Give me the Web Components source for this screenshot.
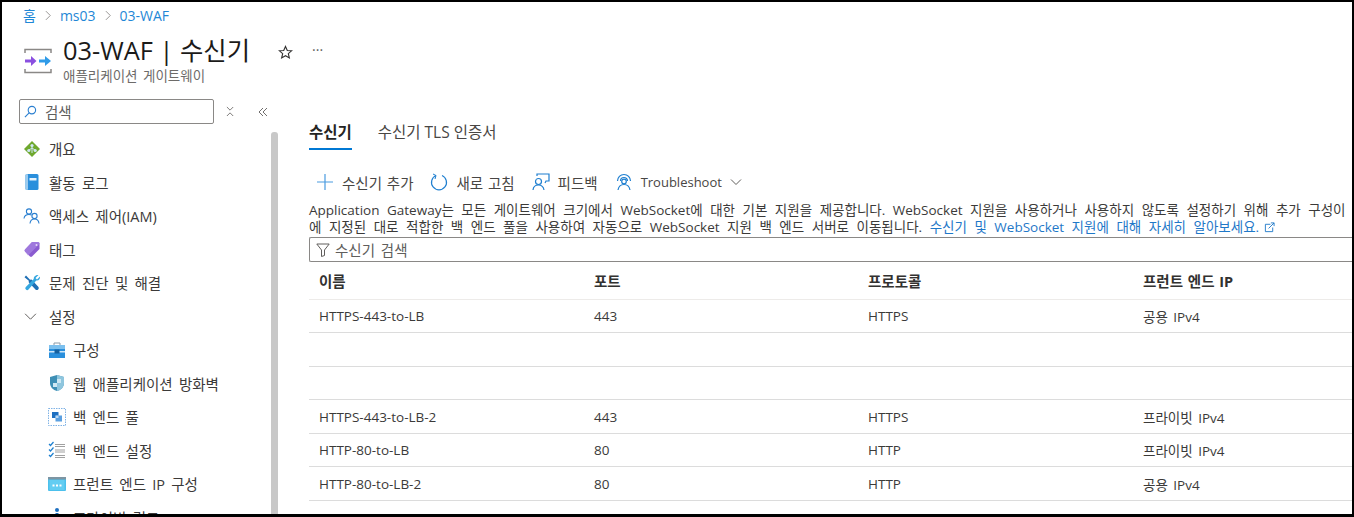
<!DOCTYPE html>
<html lang="ko">
<head>
<meta charset="utf-8">
<title>03-WAF | 수신기</title>
<style>
  html, body { margin: 0; padding: 0; background: #fff; }
  body { width: 1354px; height: 517px; overflow: hidden; font-family: "Open Sans", "Noto Sans CJK KR", sans-serif; }
</style>
</head>
<body>
<waf-page></waf-page>

<script>
const FONT = '"Open Sans", "Noto Sans CJK KR", sans-serif';

// icons used by the side menu
const ICONS = {
  overview: `<svg viewBox="0 0 18 18" width="18" height="18"><path d="M9 1l8 8-8 8-8-8z" fill="#6fa82e"/><circle cx="9" cy="5.5" r="1.6" fill="#cfe6f5"/><circle cx="5.8" cy="10.5" r="1.6" fill="#cfe6f5"/><circle cx="12.2" cy="10.5" r="1.6" fill="#cfe6f5"/><path d="M9 6v7M9 8l-3 2M9 8l3 2" stroke="#cfe6f5" fill="none"/></svg>`,
  log: `<svg viewBox="0 0 18 18" width="18" height="18"><rect x="2.5" y="1" width="13" height="16" rx="1.5" fill="#2a8fdc"/><rect x="2.5" y="1" width="2.5" height="16" rx="1" fill="#9ccbee"/><rect x="6.5" y="5" width="7" height="2.5" fill="#e6f3fc"/></svg>`,
  iam: `<svg viewBox="0 0 18 18" width="18" height="18" fill="none" stroke="#2a7fd0" stroke-width="1.1"><circle cx="6" cy="4.5" r="2.6"/><path d="M1 11.5c.3-2.6 2-4 5-4 1 0 1.8.2 2.5.6"/><circle cx="11.5" cy="9" r="2.6"/><path d="M7 16.5c.3-2.8 2-4.5 4.5-4.5s4.2 1.7 4.5 4.5"/></svg>`,
  tag: `<svg viewBox="0 0 18 18" width="18" height="18"><path d="M9 2h6a1.5 1.5 0 0 1 1.5 1.5V9L9 16.5a1.5 1.5 0 0 1-2 0L2 11.5a1.5 1.5 0 0 1 0-2z" fill="#8a5bd0"/><path d="M9 2h6a1.5 1.5 0 0 1 1.5 1.5V4L5 15.5l-3-4a1.5 1.5 0 0 1 0-2z" fill="#a884e2" opacity=".7"/><circle cx="13.5" cy="5" r="1" fill="#e8dcf8"/></svg>`,
  tools: `<svg viewBox="0 0 18 18" width="18" height="18"><path d="M3 1.5l4 4.2 1.5-.2 7 7.5a2 2 0 0 1-2.8 2.7L5.7 8.3l.1-1.5L1.5 3.2z" fill="#1f6fb5"/><path d="M15.5 1l-3 3 1.5 1.5 3-3c.4 2-1.2 4.5-3.700 4L5.500 15.500a1.800 1.800 0 0 1-2.700-2.500l8-8c-.5-2.500 2.500-4.500 4.700-4z" fill="#35a7e0"/></svg>`,
  chevron: `<svg style="margin-left: -3px" viewBox="0 0 12 12" width="13" height="13" fill="none" stroke="#605e5c" stroke-width=".9"><path d="M1 3.5l5 5 5-5"/></svg>`,
  config: `<svg viewBox="0 0 18 18" width="18" height="18"><path d="M6 4V2h6v2" fill="none" stroke="#8a9aa8" stroke-width="1"/><rect x="1" y="4" width="16" height="13" fill="#2a8fdc"/><rect x="1" y="4" width="16" height="4" fill="#7cc0ee"/><rect x="1" y="10" width="16" height="1.5" fill="#cde6f8"/><rect x="6.5" y="8.5" width="5" height="4" fill="#15609f"/></svg>`,
  shield: `<svg viewBox="0 0 18 18" width="18" height="18"><path d="M9 1l7 2v6c0 4-3 7-7 8-4-1-7-4-7-8V3z" fill="#3e8fb5"/><path d="M9 1l7 2v6c0 4-3 7-7 8z" fill="#8fc6de"/><path d="M9 5h4v4H9z" fill="#cfe8f3"/><path d="M5 9h4v4H5z" fill="#cfe8f3"/></svg>`,
  pool: `<svg viewBox="0 0 18 18" width="18" height="18"><rect x=".5" y=".5" width="17" height="17" fill="#fff" stroke="#7fb2e5" stroke-dasharray="1.5 1"/><rect x="4" y="4" width="6.5" height="6" fill="#1e6fc0"/><rect x="7.5" y="7.5" width="6.5" height="6" fill="#5a9fe0"/><rect x="7.5" y="7.5" width="3" height="2.5" fill="#bcd9f3"/></svg>`,
  settings: `<svg viewBox="0 0 18 18" width="18" height="18" fill="none"><path d="M1 3l1.500 1.500L5.500 1M1 8.500L2.500 10l3-3.500M1 14l1.500 1.500 3-3.500" stroke="#1e80d0" stroke-width="1.2"/><path d="M7 3.500h10M7 5.500h10M7 9h10M7 11h10M7 14.500h10M7 16.500h10" stroke="#a0a0a0"/></svg>`,
  frontend: `<svg viewBox="0 0 18 18" width="18" height="18"><rect x="0" y="2" width="18" height="14" rx="1" fill="#4cc0ec"/><rect x="0" y="2" width="18" height="2.5" fill="#7d95a3"/><rect x="1.5" y="5" width="15" height="10" fill="#63cdf2"/><g fill="#fff"><rect x="4.5" y="9.5" width="2" height="2"/><rect x="8" y="9.5" width="2" height="2"/><rect x="11.5" y="9.5" width="2" height="2"/></g></svg>`,
  link: `<svg viewBox="0 0 18 18" width="18" height="18"><circle cx="9" cy="2" r="2" fill="#1e6fc0"/><rect x="7.5" y="5" width="3" height="12" fill="#1e6fc0"/></svg>`
};

// breadcrumb line and resource title
class WafHeader extends HTMLElement {
  constructor() {
    super();
    this.attachShadow({ mode: 'open' });
    this.shadowRoot.innerHTML = `
      <style>
        :host { display: block; font-family: ${FONT}; }
        .crumbs { display: flex; align-items: center; height: 20px; padding: 3px 0 0 21px; font-size: 14px; color: #1f87d6; }
        .crumbs svg { margin: 0 8px 0 9px; }
        .head { display: flex; align-items: flex-start; margin-top: 9px; padding-left: 22px; }
        .logo { margin-top: 14px; }
        .titles { margin-left: 11px; }
        h1 { margin: 0; font-size: 25.4px; line-height: 32px; font-weight: 400; color: #1b1a19; white-space: nowrap; }
        .sub { font-size: 13.5px; word-spacing: 2px; line-height: 14px; margin-top: 3px; color: #6d6b69; white-space: nowrap; }
        .star { margin: 11px 0 0 28px; }
        .more { margin: 6px 0 0 19px; font-size: 14px; color: #605e5c; }
      </style>
      <div class="crumbs">
        <span>홈</span>
        <svg viewBox="0 0 8 12" width="7" height="11" fill="none" stroke="#8a8886"><path d="M1 1l5 5-5 5"/></svg>
        <span>ms03</span>
        <svg viewBox="0 0 8 12" width="7" height="11" fill="none" stroke="#8a8886"><path d="M1 1l5 5-5 5"/></svg>
        <span>03-WAF</span>
      </div>
      <div class="head">
        <svg class="logo" viewBox="0 0 28 26" width="28" height="26">
          <path d="M1 5V1.500h26V5M1 21v3.500h26V21" fill="none" stroke="#8a8886" stroke-width="1.5"/>
          <path d="M1 13h7" stroke="#8a4fe0" stroke-width="3"/><path d="M7 8l5.500 5-5.500 5z" fill="#8a4fe0"/>
          <path d="M15 13h7" stroke="#2f9be8" stroke-width="3"/><path d="M21 8l6 5-6 5z" fill="#2f9be8"/>
        </svg>
        <div class="titles">
          <h1>03-WAF | 수신기</h1>
          <div class="sub">애플리케이션 게이트웨이</div>
        </div>
        <svg class="star" viewBox="0 0 16 16" width="15" height="15" fill="none" stroke="#323130" stroke-width="1.2"><path d="M8 1.500l1.900 4.300 4.600.4-3.500 3 1.100 4.600L8 11.400 3.900 13.800 5 9.200l-3.500-3 4.600-.4z"/></svg>
        <div class="more">···</div>
      </div>
    `;
  }
}

// left hand resource menu, with a scrollbar on the right edge
class WafSidebar extends HTMLElement {
  constructor() {
    super();
    this.attachShadow({ mode: 'open' });
    this.shadowRoot.innerHTML = `
      <style>
        :host { display: block; width: 278px; flex: none; font-family: ${FONT}; position: relative; height: 100%; overflow: hidden; }
        .search-row { display: flex; align-items: center; padding-left: 17px; height: 25px; }
        .search { box-sizing: border-box; width: 195px; height: 25px; border: 1px solid #8a8886; border-radius: 2px; display: flex; align-items: center; padding-left: 4px; font-size: 14.5px; color: #605e5c; gap: 8px; }
        .x { margin-left: 12px; }
        .coll { margin-left: 23px; }
        .scroll { position: absolute; left: 269px; top: 33px; bottom: 0; width: 7px; background: #c8c8c8; border-radius: 3px 3px 0 0; }
        .items { padding-top: 8px; }
      </style>
      <div class="search-row">
        <div class="search">
          <svg viewBox="0 0 14 14" width="13" height="13" fill="none" stroke="#2a7fd0" stroke-width="1.2"><circle cx="8.5" cy="5.5" r="4"/><path d="M5.500 8.500L1 13"/></svg>
          <span>검색</span>
        </div>
        <svg class="x" viewBox="0 0 10 12" width="9" height="11" fill="none" stroke="#605e5c" stroke-width=".9"><path d="M1 1l3.500 3.500L8 1M1 11l3.500-3.500L8 11"/></svg>
        <svg class="coll" viewBox="0 0 10 10" width="10" height="10" fill="none" stroke="#605e5c" stroke-width=".9"><path d="M5 1L1 5l4 4M9 1L5 5l4 4"/></svg>
      </div>
      <div class="items"><slot></slot></div>
      <div class="scroll"></div>
    `;
  }
}

// one row of the side menu; the child attribute indents items of a group
class WafNavItem extends HTMLElement {
  constructor() {
    super();
    this.attachShadow({ mode: 'open' });
  }
  connectedCallback() {
    const icon = ICONS[this.getAttribute('icon')] || '';
    const child = this.hasAttribute('child');
    this.shadowRoot.innerHTML = `
      <style>
        :host { display: flex; align-items: center; height: 33.5px; padding-left: ${child ? 46 : 21}px; font-size: 14.5px; word-spacing: 2.5px; color: #3b3a39; white-space: nowrap; }
        .icon { width: 18px; height: 18px; flex: none; margin-right: ${child ? 7 : 8}px; display: flex; align-items: center; justify-content: center; }
      </style>
      <span class="icon">${icon}</span><slot></slot>
    `;
  }
}

class WafTabs extends HTMLElement {
  constructor() {
    super();
    this.attachShadow({ mode: 'open' });
    this.shadowRoot.innerHTML = `
      <style>
        :host { display: flex; gap: 26px; font-family: ${FONT}; font-size: 15.5px; color: #484644; }
        div { height: 27px; line-height: 22px; white-space: nowrap; }
        .on { font-weight: 700; color: #252423; border-bottom: 2px solid #0078d4; }
      </style>
      <div class="on">수신기</div>
      <div>수신기 TLS 인증서</div>
    `;
  }
}

class WafToolbar extends HTMLElement {
  constructor() {
    super();
    this.attachShadow({ mode: 'open' });
    this.shadowRoot.innerHTML = `
      <style>
        :host { display: flex; align-items: center; height: 24px; font-family: ${FONT}; font-size: 14.5px; word-spacing: 1px; color: #484644; padding-left: 8px; white-space: nowrap; }
        span { display: flex; align-items: center; gap: 8px; margin-right: 17px; }
        .latin { font-size: 13px; }
        svg { flex: none; }
      </style>
      <span style="gap: 9px">
        <svg viewBox="0 0 16 16" width="16" height="16" fill="none" stroke="#4a9be0" stroke-width="1.2"><path d="M8 0v16M0 8h16"/></svg>
        수신기 추가
      </span>
      <span>
        <svg viewBox="0 0 18 18" width="18" height="18" fill="none" stroke="#1f7fd0" stroke-width="1.2"><path d="M6 2.500a7.500 7.500 0 1 0 6 0"/><path d="M3 1l3 1.500-1 3.500" stroke-width="1"/></svg>
        새로 고침
      </span>
      <span>
        <svg viewBox="0 0 18 18" width="18" height="18" fill="none" stroke="#1f7fd0" stroke-width="1.2"><path d="M5 3V1h12v7h-3l-1 2"/><circle cx="6.5" cy="8.5" r="3"/><path d="M1 17c.3-3 2.500-5 5.500-5s5 2 5.500 5"/></svg>
        피드백
      </span>
      <span class="latin">
        <svg viewBox="0 0 18 18" width="18" height="18" fill="none" stroke="#1f7fd0" stroke-width="1.2"><path d="M2.500 8a6.500 6.500 0 1 1 13 0"/><path d="M5.500 8a3.500 3.500 0 1 1 7 0"/><circle cx="9" cy="8.500" r="2.300"/><path d="M3 17c.5-3 2.500-5.500 6-5.500s5.500 2.500 6 5.500"/></svg>
        Troubleshoot
        <svg viewBox="0 0 12 12" width="12" height="12" fill="none" stroke="#605e5c"><path d="M1 3.500l5 5 5-5"/></svg>
      </span>
    `;
  }
}

class WafNotice extends HTMLElement {
  constructor() {
    super();
    this.attachShadow({ mode: 'open' });
    this.shadowRoot.innerHTML = `
      <style>
        :host { display: block; font-family: ${FONT}; font-size: 13.5px; word-spacing: 4px; line-height: 17px; color: #3b3a39; white-space: nowrap; }
        a { color: #1f78c8; text-decoration: none; }
        svg { vertical-align: -1px; margin-left: -3px; }
      </style>
      Application Gateway는 모든 게이트웨어 크기에서 WebSocket에 대한 기본 지원을 제공합니다. WebSocket 지원을 사용하거나 사용하지 않도록 설정하기 위해 추가 구성이<br>
      에 지정된 대로 적합한 백 엔드 풀을 사용하여 자동으로 WebSocket 지원 백 엔드 서버로 이동됩니다. <a>수신기 및 WebSocket 지원에 대해 자세히 알아보세요.
      <svg viewBox="0 0 12 12" width="11" height="11" fill="none" stroke="#1f78c8"><path d="M7 2.500H1.500v8h8V6M5 7l6-6M7.500 1H11v3.500"/></svg></a>
    `;
  }
}

class WafFilter extends HTMLElement {
  constructor() {
    super();
    this.attachShadow({ mode: 'open' });
    this.shadowRoot.innerHTML = `
      <style>
        :host { box-sizing: border-box; display: flex; align-items: center; gap: 5px; height: 25px; padding-left: 6px; border: 1px solid #8a8886; border-right: 0; border-radius: 2px 0 0 2px; font-family: ${FONT}; font-size: 14.5px; word-spacing: 2px; color: #605e5c; }
      </style>
      <svg viewBox="0 0 14 14" width="14" height="14" fill="none" stroke="#605e5c"><path d="M.8 1h12.400L8.500 7v5.500l-3 1V7z"/></svg>
      <span>수신기 검색</span>
    `;
  }
}

// listener table; columns come from the grid on each row
class WafTable extends HTMLElement {
  constructor() {
    super();
    this.attachShadow({ mode: 'open' });
  }
  set rows(data) {
    this._rows = data;
    this.render();
  }
  render() {
    const head = ['이름', '포트', '프로토콜', '프런트 엔드 IP'];
    const row = (cells, cls) => `<div class="row ${cls}">${cells.map(c => `<div>${c}</div>`).join('')}</div>`;
    this.shadowRoot.innerHTML = `
      <style>
        :host { display: block; font-family: ${FONT}; font-size: 13.5px; word-spacing: 2px; color: #3b3a39; white-space: nowrap; }
        .row { display: grid; grid-template-columns: 275px 274px 275px 1fr; align-items: center; box-sizing: border-box; height: 33.5px; padding: 1px 0 0 10px; border-bottom: 1px solid #dcdcdc; }
        .head { height: 37.5px; font-size: 14.5px; word-spacing: 1px; font-weight: 700; color: #323130; border-bottom-color: #edebe9; padding-top: 0; }
      </style>
      ${row(head, 'head')}
      ${this._rows.map(r => row(r, '')).join('')}
    `;
  }
}

class WafPage extends HTMLElement {
  constructor() {
    super();
    this.attachShadow({ mode: 'open' });
    this.shadowRoot.innerHTML = `
      <style>
        :host { display: flex; flex-direction: column; box-sizing: border-box; width: 1354px; height: 517px; border: solid #000; border-width: 2px 2px 3px 2px; overflow: hidden; background: #fff; }
        .body { display: flex; flex: 1; min-height: 0; margin-top: 16px; }
        .main { flex: 1; min-width: 0; padding: 22px 0 0 29px; overflow: hidden; }
        waf-toolbar { margin-top: 20px; }
        waf-notice { margin-top: 8px; }
        waf-filter { margin-top: 1px; }
      </style>
      <waf-header></waf-header>
      <div class="body">
        <waf-sidebar>
          <waf-nav-item icon="overview">개요</waf-nav-item>
          <waf-nav-item icon="log">활동 로그</waf-nav-item>
          <waf-nav-item icon="iam">액세스 제어(IAM)</waf-nav-item>
          <waf-nav-item icon="tag">태그</waf-nav-item>
          <waf-nav-item icon="tools">문제 진단 및 해결</waf-nav-item>
          <waf-nav-item icon="chevron">설정</waf-nav-item>
          <waf-nav-item icon="config" child>구성</waf-nav-item>
          <waf-nav-item icon="shield" child>웹 애플리케이션 방화벽</waf-nav-item>
          <waf-nav-item icon="pool" child>백 엔드 풀</waf-nav-item>
          <waf-nav-item icon="settings" child>백 엔드 설정</waf-nav-item>
          <waf-nav-item icon="frontend" child>프런트 엔드 IP 구성</waf-nav-item>
          <waf-nav-item icon="link" child>프라이빗 링크</waf-nav-item>
        </waf-sidebar>
        <div class="main">
          <waf-tabs></waf-tabs>
          <waf-toolbar></waf-toolbar>
          <waf-notice></waf-notice>
          <waf-filter></waf-filter>
          <waf-table></waf-table>
        </div>
      </div>
    `;
  }
  connectedCallback() {
    this.shadowRoot.querySelector('waf-table').rows = [
      ['HTTPS-443-to-LB', '443', 'HTTPS', '공용 IPv4'],
      ['', '', '', ''],
      ['', '', '', ''],
      ['HTTPS-443-to-LB-2', '443', 'HTTPS', '프라이빗 IPv4'],
      ['HTTP-80-to-LB', '80', 'HTTP', '프라이빗 IPv4'],
      ['HTTP-80-to-LB-2', '80', 'HTTP', '공용 IPv4']
    ];
  }
}

// children first, so the page can set rows on a defined table
customElements.define('waf-header', WafHeader);
customElements.define('waf-sidebar', WafSidebar);
customElements.define('waf-nav-item', WafNavItem);
customElements.define('waf-tabs', WafTabs);
customElements.define('waf-toolbar', WafToolbar);
customElements.define('waf-notice', WafNotice);
customElements.define('waf-filter', WafFilter);
customElements.define('waf-table', WafTable);
customElements.define('waf-page', WafPage);
</script>
</body>
</html>
